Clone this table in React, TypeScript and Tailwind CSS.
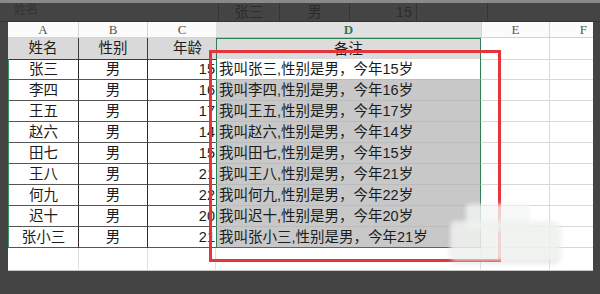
import React from 'react';

interface Person {
  name: string;
  age: number;
}

const people: Person[] = [
  { name: '张三', age: 15 },
  { name: '李四', age: 16 },
  { name: '王五', age: 17 },
  { name: '赵六', age: 14 },
  { name: '田七', age: 15 },
  { name: '王八', age: 21 },
  { name: '何九', age: 22 },
  { name: '迟十', age: 20 },
  { name: '张小三', age: 21 },
];

const font = { fontFamily: '"Liberation Sans", "Noto Sans CJK SC", sans-serif' };
const cols = 'grid grid-cols-[71px_69px_68px_265px_69px_43px]';

const App: React.FC = () => {
  return (
    <div className="relative w-[600px] h-[294px] overflow-hidden bg-[#444444] text-[14.5px] text-[#1c1c1c]" style={font}>
      {/* title strip + ghost drag preview */}
      <div className="h-[3px] bg-[#8a8a8a]" />
      <div className="flex h-[19px] border-b border-[#333] text-[#2c2c2c]">
        <div className="w-[218px] pl-[14px] text-[12px] leading-[14px] text-[#333]">姓名</div>
        <div className="w-[62px] border-x border-[#363636] text-center leading-[18px]">张三</div>
        <div className="w-[70px] border-r border-[#363636] text-center leading-[18px]">男</div>
        <div className="w-[67px] border-r border-[#363636] pr-[4px] text-right leading-[18px]">15</div>
        <div className="w-[71px] border-r border-[#363636]" />
      </div>

      <div className="flex">
        <div className="w-[8px]" />
        <div className="w-[585px] bg-white">
          {/* column letters */}
          <div className={`${cols} h-[16px] text-[13px] leading-[15px] text-[#555]`} style={{ fontFamily: '"Liberation Serif", serif' }}>
            <div className="border-r border-b border-[#d4d4d4] bg-[#fbfbfb] text-center">A</div>
            <div className="border-r border-b border-[#d4d4d4] bg-[#fbfbfb] text-center">B</div>
            <div className="border-b border-[#d4d4d4] bg-[#fbfbfb] text-center">C</div>
            <div className="border-b border-[#bdbdbd] bg-[#e1e1e1] text-center font-bold text-[#2f7a52]">D</div>
            <div className="border-x border-b border-[#d4d4d4] bg-[#fbfbfb] text-center">E</div>
            <div className="border-b border-[#d4d4d4] bg-[#fbfbfb] pr-[6px] text-right">F</div>
          </div>

          {/* header row */}
          <div className={`${cols} h-[21px] leading-[20px] text-[#1c1c1c]`}>
            <div className="border-r border-b border-[#3a3a3a] bg-[#d9d9d9] text-center">姓名</div>
            <div className="border-r border-b border-[#3a3a3a] bg-[#d9d9d9] text-center text-[#1c1c1c]">性别</div>
            <div className="border-b border-[#3a3a3a] bg-[#d9d9d9] pr-[14px] text-right">年龄</div>
            <div className="border border-[#2e7d55] bg-[#dcdcdc] text-center">备注</div>
            <div className="border-r border-b border-[#d8d8d8]" />
            <div className="border-b border-[#d8d8d8]" />
          </div>

          {/* data rows */}
          {people.map((p, i) => {
            const last = i === people.length - 1;
            return (
              <div key={p.name} className={`${cols} h-[21px] leading-[20px]`}>
                <div className="border-l border-l-[#3d9467] border-r border-r-[#2a2a2a] border-b border-b-[#555] text-center">{p.name}</div>
                <div className="border-r border-r-[#2a2a2a] border-b border-b-[#555] text-center">男</div>
                <div className="border-b border-[#555] pr-[1px] text-right">{p.age}</div>
                <div className={`border-x border-[#2e7d55] pl-[2px] ${last ? 'border-b border-b-[#2e7d55]' : 'border-b border-b-[#bcbcbc]'} ${i === 0 ? 'bg-white' : 'bg-[#c8c8c8]'}`}>
                  <span className="whitespace-nowrap">我叫{p.name},性别是男，今年{p.age}岁</span>
                </div>
                <div className="border-r border-b border-[#d8d8d8]" />
                <div className="border-b border-[#d8d8d8]" />
              </div>
            );
          })}

          {/* empty row */}
          <div className={`${cols} h-[23px] border-b border-[#c8c8c8]`}>
            <div className="border-r border-[#e0e0e0]" />
            <div className="border-r border-[#e0e0e0]" />
            <div className="border-r border-[#e0e0e0]" />
            <div className="border-r border-[#e0e0e0]" />
            <div className="border-r border-[#e0e0e0]" />
            <div />
          </div>
        </div>
      </div>

      {/* red annotation box */}
      <div className="absolute left-[209px] top-[50px] w-[292px] h-[212px] border-[3px] border-[#e6343b]" />

      {/* blurred smudge over the bottom right */}
      <div className="absolute left-[466px] top-[204px] w-[64px] h-[26px] rounded-sm bg-[#f4f6f5]/80 blur-[2px]" />
      <div className="absolute left-[450px] top-[221px] w-[110px] h-[40px] rounded-md bg-[#eef1ef]/85 blur-[2px] shadow-[0_2px_3px_rgba(0,0,0,0.15)]" />
    </div>
  );
};

export default App;
